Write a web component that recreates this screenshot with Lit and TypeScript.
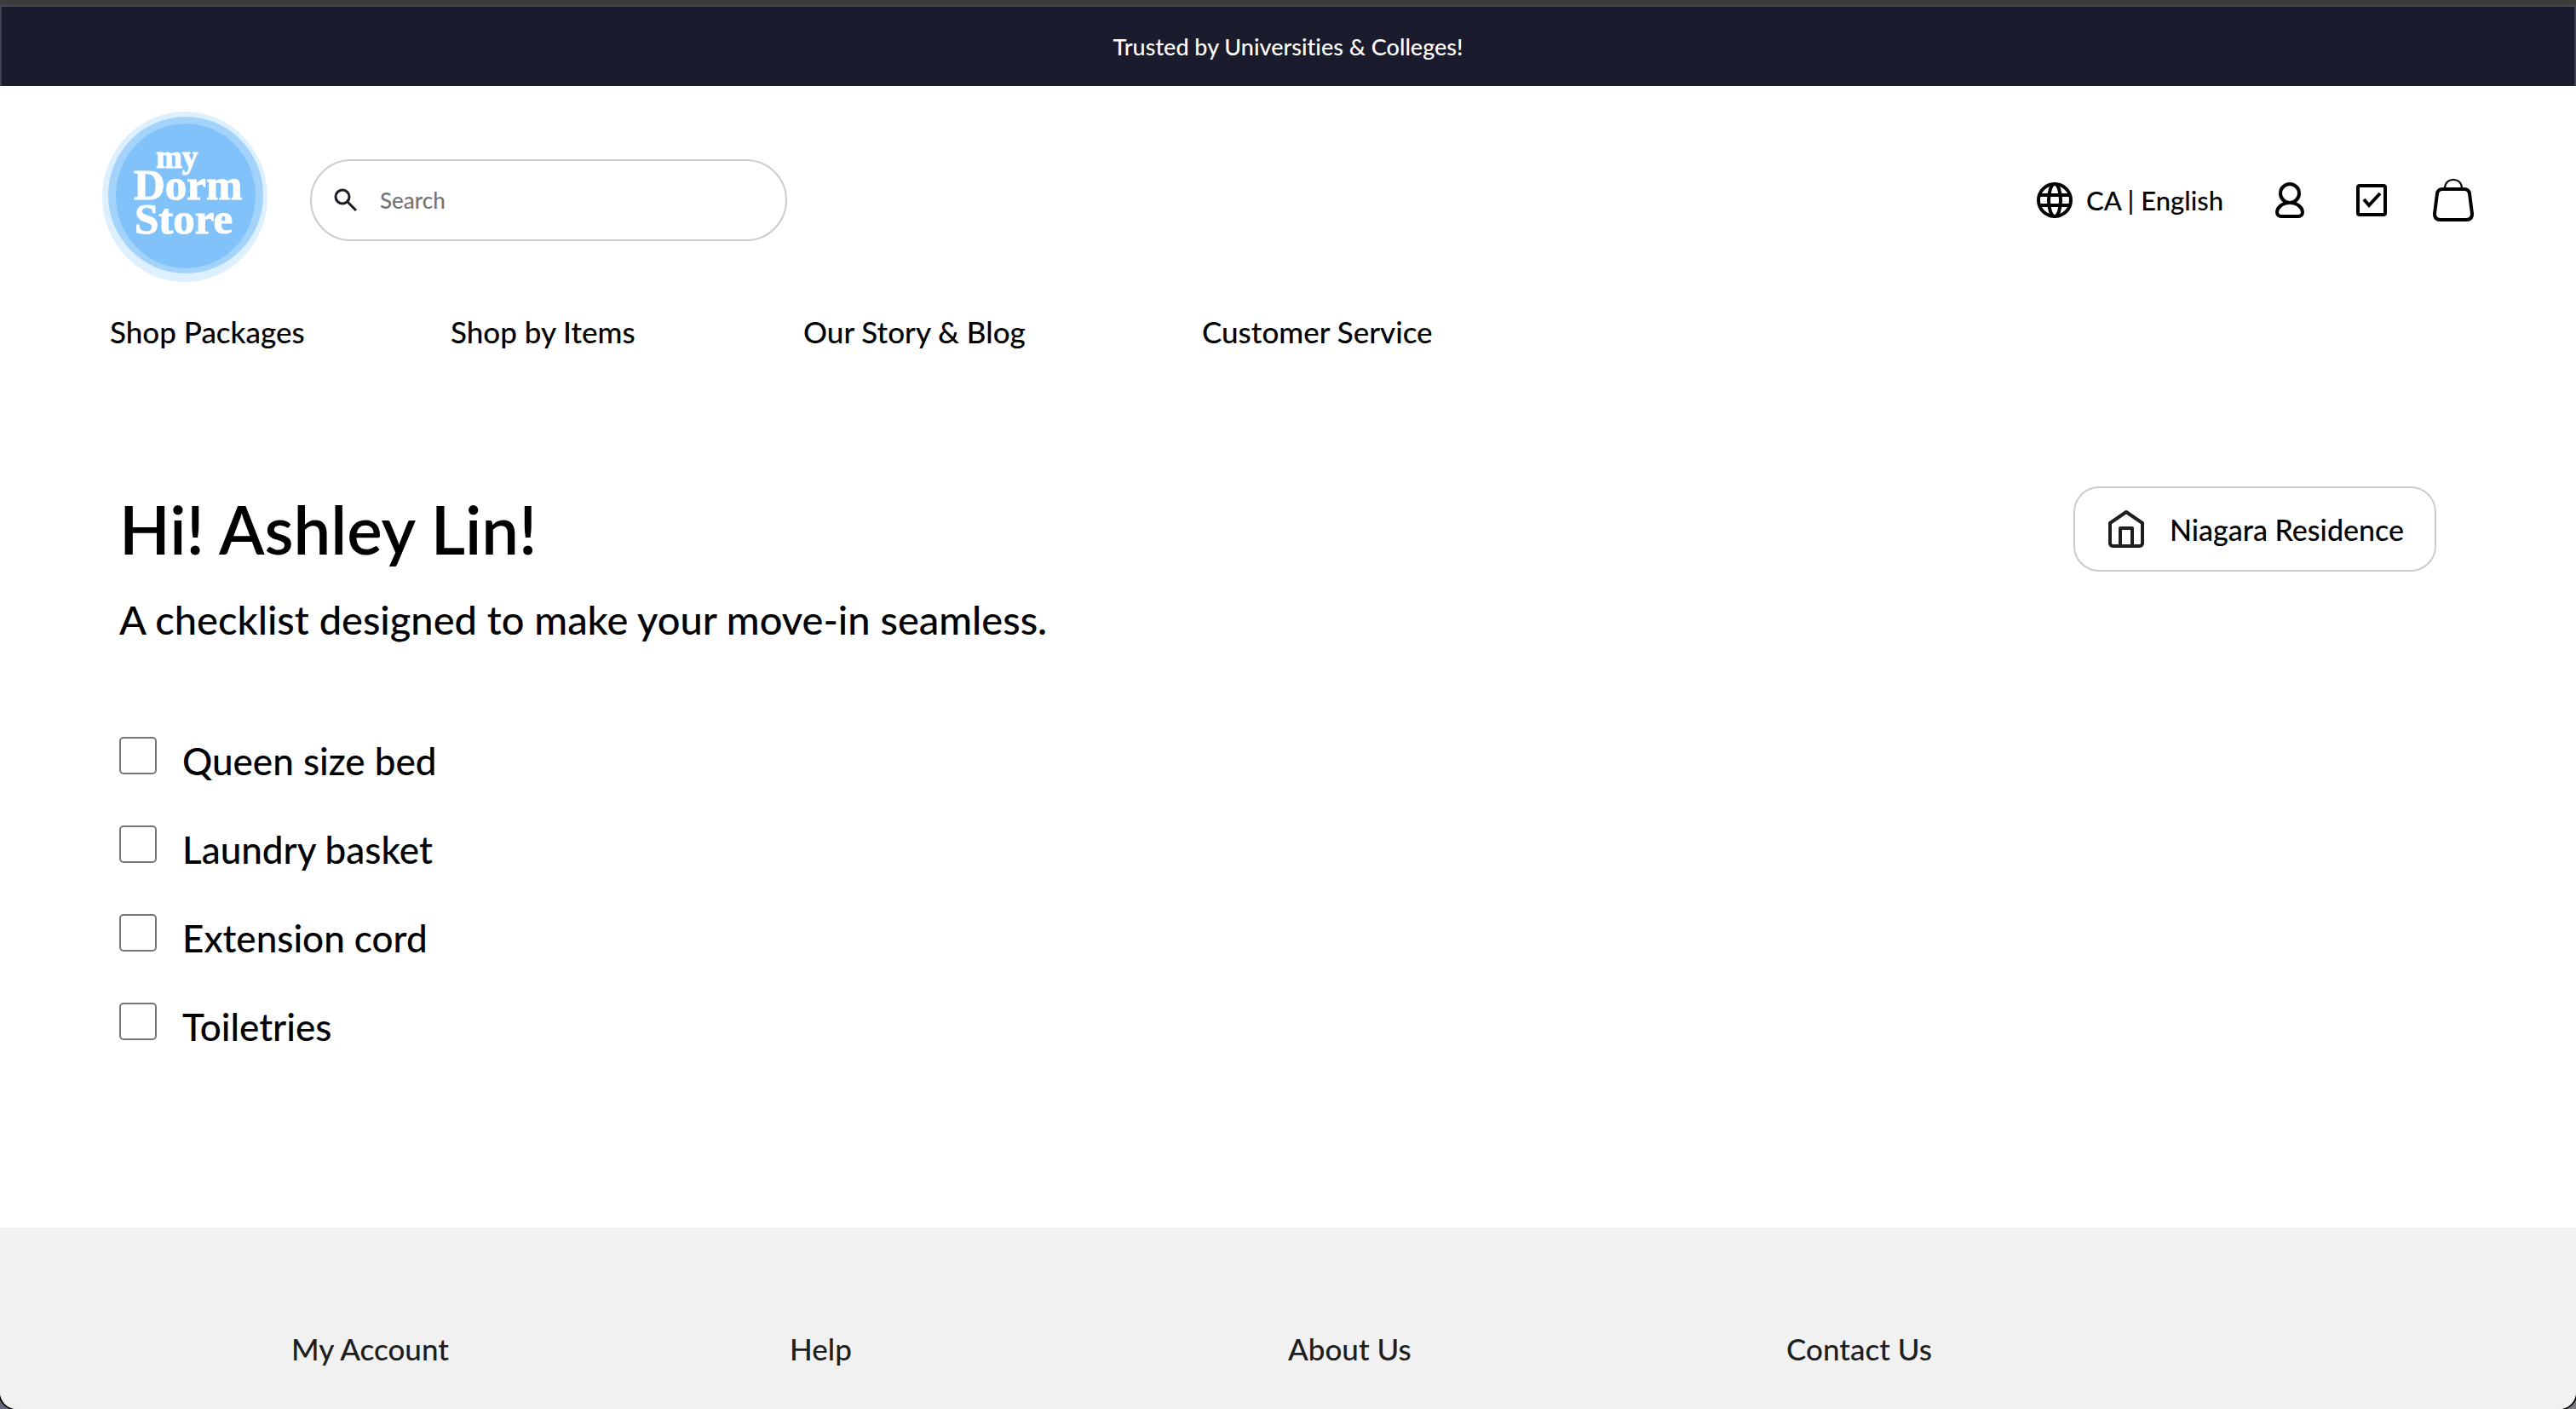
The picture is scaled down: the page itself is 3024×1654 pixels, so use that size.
import { LitElement, html, css, svg } from "lit";
import { customElement, state } from "lit/decorators.js";

interface ChecklistItem {
  id: string;
  label: string;
  done: boolean;
}

const logo = svg`
  <svg class="logo-art" viewBox="0 0 194 200" role="img" aria-label="my Dorm Store">
    <ellipse cx="97" cy="100" rx="97" ry="100" fill="#dcf0ff" />
    <ellipse cx="98" cy="98" rx="91" ry="92" fill="#a3d3fb" />
    <ellipse cx="98" cy="99" rx="82" ry="85" fill="#80c2f9" />
    <g stroke="#fff" stroke-width="1">
      <text x="63" y="66" font-size="37">my</text>
      <text x="37" y="103" font-size="51">Dorm</text>
      <text x="38" y="143" font-size="51">Store</text>
    </g>
  </svg>`;

const searchIcon = svg`
  <svg class="search-icon" viewBox="0 0 28 28" fill="none" stroke="#1b1b24" stroke-width="3" aria-hidden="true">
    <circle cx="10" cy="10" r="8" />
    <path d="M16 16 L26 26" />
  </svg>`;

const globeIcon = svg`
  <svg class="globe" viewBox="0 0 42 42" fill="none" stroke="#000" stroke-width="4" aria-hidden="true">
    <circle cx="21" cy="21" r="19" />
    <ellipse cx="21" cy="21" rx="7" ry="19" />
    <path d="M3 15 H39 M3 27 H39" />
  </svg>`;

const personIcon = svg`
  <svg class="person" viewBox="0 0 34 42" fill="none" stroke="#000" stroke-width="4" aria-hidden="true">
    <ellipse cx="17" cy="13" rx="11" ry="11" />
    <path d="M17 24 C8 24 2 30 2 35 C2 38 4 40 7 40 H27 C30 40 32 38 32 35 C32 30 26 24 17 24 Z" />
  </svg>`;

const checkIcon = svg`
  <svg class="check" viewBox="0 0 36 38" fill="none" stroke="#000" stroke-width="4" aria-hidden="true">
    <rect x="2" y="2" width="32" height="34" rx="2" />
    <path d="M9 18 L15 25 L28 11" />
  </svg>`;

const bagIcon = svg`
  <svg class="bag" viewBox="0 0 48 50" fill="none" stroke="#000" stroke-width="4" aria-hidden="true">
    <path d="M14 11 C14 5 18 1 24 1 C30 1 34 5 34 11" stroke-width="2" />
    <path d="M11 12 H37 C40 12 42 13 43 17 L46 41 C46 45 44 48 39 48 H9 C4 48 2 45 2 41 L5 17 C6 13 8 12 11 12 Z" />
  </svg>`;

const houseIcon = svg`
  <svg class="house" viewBox="0 0 42 46" fill="none" stroke="#1e1e1e" stroke-width="4" stroke-linejoin="round" aria-hidden="true">
    <path d="M2 16 L21 3 L40 16 V40 C40 42 38 43 36 43 H6 C4 43 2 42 2 40 Z" />
    <path d="M14 43 V22 H28 V43" />
  </svg>`;

@customElement("app-root")
export class AppRoot extends LitElement {
  static styles = css`
    :host {
      display: block;
      background: linear-gradient(90deg, #646a7c, #7c7c80);
      font-family: Lato, "Open Sans", sans-serif;
      font-weight: 500;
      font-variant-ligatures: none;
      color: #000;
    }
    * {
      box-sizing: border-box;
    }
    a {
      color: inherit;
      text-decoration: none;
    }
    button,
    input {
      font: inherit;
      color: inherit;
    }
    svg {
      display: block;
      flex: none;
    }
    .page {
      display: flex;
      flex-direction: column;
      min-height: 100vh;
      background: #fff;
      border-radius: 0 0 20px 20px;
      box-shadow: 0 0 0 2px #000;
      overflow: hidden;
    }
    .banner {
      height: 101px;
      padding-top: 2px;
      border-top: 6px solid #3c3c3c;
      border-left: 2px solid #404050;
      border-right: 2px solid #404050;
      background: #1a1b2c;
      box-shadow: inset 0 2px #464646;
      color: #fff;
      display: flex;
      align-items: center;
      justify-content: center;
      font-size: 27px;
      line-height: 36px;
    }
    .banner p {
      margin: 0;
    }
    .top {
      display: flex;
      align-items: center;
      padding: 30px 120px 0;
    }
    .logo-art {
      width: 194px;
      height: 200px;
      fill: #fff;
      font-family: "Liberation Serif", serif;
      font-weight: 700;
    }
    .search {
      display: flex;
      align-items: center;
      gap: 26px;
      width: 560px;
      height: 96px;
      margin: 8px auto 0 50px;
      padding: 0 26px;
      border: 2px solid #ccc;
      border-radius: 48px;
    }
    .search-icon {
      width: 28px;
      height: 28px;
    }
    .search-input {
      flex: 1;
      min-width: 0;
      padding: 0;
      border: 0;
      outline: 0;
      background: none;
      font-size: 26px;
    }
    .search-input::placeholder {
      color: #757575;
      opacity: 1;
    }
    .tools {
      display: flex;
      align-items: center;
      gap: 48px;
      margin-top: 8px;
    }
    .tool {
      display: flex;
      align-items: center;
      justify-content: center;
      min-width: 48px;
      padding: 0;
      border: 0;
      background: none;
      cursor: pointer;
    }
    .locale {
      gap: 16px;
      padding-right: 6px;
      font-size: 31px;
      line-height: 40px;
    }
    .globe {
      width: 42px;
      height: 42px;
    }
    .person {
      width: 34px;
      height: 42px;
    }
    .check {
      width: 36px;
      height: 38px;
    }
    .bag {
      width: 48px;
      height: 50px;
    }
    .nav {
      display: grid;
      grid-template-columns: 400px 414px 468px auto;
      padding: 34px 129px 0;
      font-size: 35px;
      line-height: 48px;
    }
    .main {
      padding: 158px 164px 208px 140px;
    }
    .intro {
      display: flex;
      justify-content: space-between;
      align-items: flex-start;
    }
    .title {
      margin: 0;
      font-size: 78px;
      line-height: 100px;
      font-weight: 600;
    }
    .subtitle {
      margin: 24px 0 0;
      font-size: 47px;
      line-height: 64px;
    }
    .residence {
      display: flex;
      align-items: center;
      gap: 30px;
      height: 100px;
      padding: 0 36px 0 39px;
      border: 2px solid #ccc;
      border-radius: 30px;
      background: #fff;
      font-size: 34px;
      cursor: pointer;
    }
    .house {
      width: 42px;
      height: 46px;
    }
    .list {
      list-style: none;
      margin: 106px 0 0;
      padding: 0;
      display: grid;
      gap: 48px;
    }
    .item {
      display: flex;
      gap: 30px;
      height: 56px;
      font-size: 44px;
      line-height: 56px;
    }
    .box {
      appearance: none;
      width: 44px;
      height: 44px;
      margin: 0;
      border: 2px solid #767676;
      border-radius: 5px;
      background: #fff;
    }
    .box:checked {
      background: #1a1b2c;
    }
    .footer {
      flex: 1;
      display: grid;
      grid-template-columns: repeat(4, 585px);
      padding: 118px 0 0 342px;
      background: #f1f1f1;
      color: #1e1e1e;
      font-size: 35px;
      line-height: 48px;
    }
  `;

  @state() private items: ChecklistItem[] = [
    { id: "bed", label: "Queen size bed", done: false },
    { id: "basket", label: "Laundry basket", done: false },
    { id: "cord", label: "Extension cord", done: false },
    { id: "toiletries", label: "Toiletries", done: false },
  ];

  private toggle(id: string) {
    this.items = this.items.map((i) => (i.id === id ? { ...i, done: !i.done } : i));
  }

  render() {
    return html`
      <div class="page">
        <div class="banner"><p>Trusted by Universities &amp; Colleges!</p></div>
        <header>
          <div class="top">
            <a href="#home">${logo}</a>
            <label class="search">
              ${searchIcon}
              <input class="search-input" type="search" placeholder="Search" aria-label="Search" />
            </label>
            <div class="tools">
              <button class="tool locale" type="button">${globeIcon}<span>CA | English</span></button>
              <button class="tool" type="button" aria-label="Account">${personIcon}</button>
              <button class="tool" type="button" aria-label="Checklist">${checkIcon}</button>
              <button class="tool" type="button" aria-label="Bag">${bagIcon}</button>
            </div>
          </div>
          <nav class="nav">
            <a href="#packages">Shop Packages</a>
            <a href="#items">Shop by Items</a>
            <a href="#story">Our Story &amp; Blog</a>
            <a href="#service">Customer Service</a>
          </nav>
        </header>
        <main class="main">
          <div class="intro">
            <div>
              <h1 class="title">Hi! Ashley Lin!</h1>
              <p class="subtitle">A checklist designed to make your move-in seamless.</p>
            </div>
            <button class="residence" type="button">${houseIcon}<span>Niagara Residence</span></button>
          </div>
          <ul class="list">
            ${this.items.map(
              (i) => html`<li class="item">
                <input class="box" type="checkbox" id=${i.id} .checked=${i.done} @change=${() => this.toggle(i.id)} />
                <label for=${i.id}>${i.label}</label>
              </li>`
            )}
          </ul>
        </main>
        <footer class="footer">
          <a href="#account">My Account</a>
          <a href="#help">Help</a>
          <a href="#about">About Us</a>
          <a href="#contact">Contact Us</a>
        </footer>
      </div>
    `;
  }
}
